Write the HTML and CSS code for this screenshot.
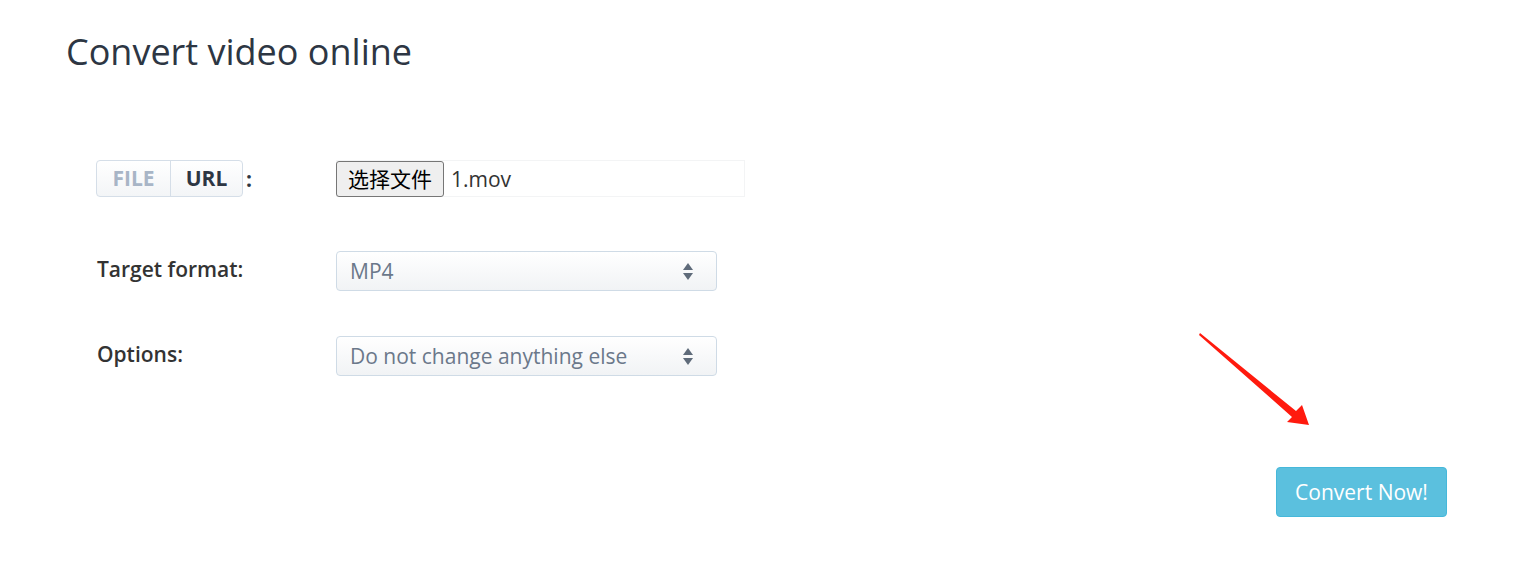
FILE: index.html
```html
<!DOCTYPE html>
<html lang="en">
<head>
    <meta charset="UTF-8">
    <meta name="viewport" content="width=device-width, initial-scale=1.0">
    <title>Convert video online</title>
    <link rel="stylesheet" href="styles.css">
</head>
<body>
    <div class="page">
        <h1 class="title">Convert video online</h1>

        <form class="converter">
            <div class="row row-file">
                <div class="label">
                    <div class="tabs">
                        <span class="tab tab-file">FILE</span>
                        <span class="tab tab-url">URL</span>
                    </div>
                    <span class="colon">:</span>
                </div>
                <div class="control">
                    <div class="file-box">
                        <span class="file-btn">选择文件</span>
                        <span class="file-name">1.mov</span>
                    </div>
                </div>
            </div>

            <div class="row">
                <div class="label">Target format:</div>
                <div class="control">
                    <div class="select">
                        <span>MP4</span>
                        <span class="caret"></span>
                    </div>
                </div>
            </div>

            <div class="row">
                <div class="label">Options:</div>
                <div class="control">
                    <div class="select">
                        <span>Do not change anything else</span>
                        <span class="caret"></span>
                    </div>
                </div>
            </div>

            <div class="actions">
                <button type="button" class="convert">Convert Now!</button>
            </div>
        </form>

        <!-- red annotation arrow -->
        <svg class="arrow" width="120" height="100" viewBox="0 0 120 100">
            <polygon points="1,0 97,78 103,72 110,92 88,89 93,84 0,2" fill="#ff1a0e"/>
        </svg>
    </div>
</body>
</html>
```

FILE: styles.css
```css
body {
    margin: 0;
    font-family: "Open Sans", sans-serif;
    background: #fff;
    color: #2d3643;
}
.page {
    position: relative;
    padding: 26px 83px 0 66px;
}
.title {
    margin: 0;
    font-size: 36px;
    font-weight: 400;
    line-height: 52px;
    color: #2d3643;
}
.converter {
    padding: 82px 0 0 31px;
}
.row {
    display: flex;
    align-items: flex-start;
    margin-bottom: 45px;
}
.row-file {
    margin-bottom: 54px;
}
.label {
    width: 239px;
    flex-shrink: 0;
    display: flex;
    align-items: center;
    padding-top: 4px;
    font-size: 21px;
    font-weight: 600;
    color: #333;
}
.row-file .label {
    padding-top: 0;
}
.tabs {
    display: flex;
    margin-left: -1px;
    border: 1px solid #d5dee8;
    border-radius: 4px;
    overflow: hidden;
    background: linear-gradient(#fff, #f3f5f7);
}
.tab {
    height: 35px;
    line-height: 35px;
    font-size: 21px;
    font-weight: 700;
    text-align: center;
}
.tab-file {
    width: 73px;
    color: #a8b5c6;
    border-right: 1px solid #d5dee8;
}
.tab-url {
    width: 71px;
    color: #2d3643;
}
.colon {
    margin-left: 3px;
    color: #2d3643;
    font-weight: 700;
}
.file-box {
    width: 407px;
    height: 35px;
    border: 1px solid #f3f4f5;
    display: flex;
    align-items: center;
}
.file-btn {
    box-sizing: border-box;
    height: 36px;
    margin-left: -1px;
    padding: 0 11px;
    border: 1px solid #767676;
    border-radius: 3px;
    background: #efefef;
    font-family: "Noto Sans CJK SC", sans-serif;
    font-size: 21px;
    line-height: 33px;
    color: #000;
}
.file-name {
    margin-left: 7px;
    font-size: 21px;
    color: #333;
}
.select {
    box-sizing: border-box;
    width: 381px;
    height: 40px;
    padding: 0 28px 0 13px;
    border: 1px solid #cfdbe6;
    border-radius: 4px;
    background: linear-gradient(#fff, #f1f3f5);
    display: flex;
    align-items: center;
    justify-content: space-between;
    font-size: 21px;
    color: #6b788a;
}
.caret {
    width: 0;
    height: 17px;
    position: relative;
}
.caret::before,
.caret::after {
    content: "";
    position: absolute;
    left: -5px;
    border-left: 5px solid transparent;
    border-right: 5px solid transparent;
}
.caret::before {
    top: 0;
    border-bottom: 7px solid #5f6b7a;
}
.caret::after {
    bottom: 0;
    border-top: 7px solid #5f6b7a;
}
.actions {
    display: flex;
    justify-content: flex-end;
    margin-top: 91px;
}
.convert {
    width: 171px;
    height: 50px;
    border: 1px solid #46b8da;
    border-radius: 4px;
    background: #5bc0de;
    color: #fff;
    font-family: "Open Sans", sans-serif;
    font-size: 21px;
    cursor: pointer;
}
.arrow {
    position: absolute;
    left: 1199px;
    top: 333px;
}
```
